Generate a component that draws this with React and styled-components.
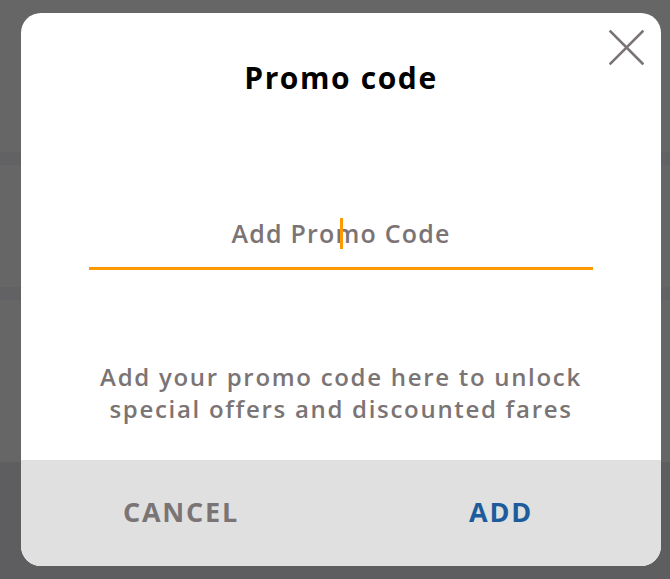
import React from "react";
import styled, { createGlobalStyle } from "styled-components";

const Global = createGlobalStyle`
  html, body {
    margin: 0;
    padding: 0;
    height: 579px;
    overflow: hidden;
  }
  body {
    font-family: "Open Sans", "Noto Sans", sans-serif;
    background: linear-gradient(
      to bottom,
      #666666 0px, #666666 152px,
      #626264 152px, #626264 165px,
      #666666 165px, #666666 287px,
      #626264 287px, #626264 300px,
      #666666 300px, #666666 462px,
      #5e5e60 462px, #5e5e60 100%
    );
  }
`;

const Page = styled.div`
  padding: 13px 9px 0 21px;
`;

const Modal = styled.div`
  position: relative;
  width: 640px;
  height: 553px;
  background: #ffffff;
  border-radius: 20px;
  overflow: hidden;
  display: flex;
  flex-direction: column;
`;

const Body = styled.div`
  flex: 1;
  display: flex;
  flex-direction: column;
  align-items: center;
`;

const Title = styled.h2`
  margin: 47px 0 0;
  font-size: 30px;
  line-height: 36px;
  font-weight: 700;
  letter-spacing: 1.6px;
  color: #000000;
`;

const Close = styled.button`
  position: absolute;
  top: 17px;
  right: 17px;
  width: 35px;
  height: 35px;
  padding: 0;
  border: none;
  background: none;
  cursor: pointer;
`;

const Field = styled.label`
  position: relative;
  display: block;
  width: 504px;
  margin-top: 117px;
  padding-bottom: 14px;
  border-bottom: 3px solid #ff9900;
`;

const Input = styled.input`
  display: block;
  width: 100%;
  height: 40px;
  padding: 0;
  border: none;
  outline: none;
  background: transparent;
  text-align: center;
  font-family: inherit;
  font-size: 25px;
  font-weight: 600;
  letter-spacing: 1.2px;
  color: #333;
  caret-color: transparent;
  &::placeholder {
    color: #7b7475;
    opacity: 1;
  }
`;

const Caret = styled.span`
  position: absolute;
  left: 251px;
  top: 5px;
  width: 3px;
  height: 31px;
  background: #ff9900;
`;

const Hint = styled.p`
  margin: 91px 0 0;
  text-align: center;
  font-size: 24px;
  line-height: 32px;
  font-weight: 600;
  letter-spacing: 1.7px;
  color: #7b7475;
`;

const Footer = styled.div`
  height: 106px;
  padding-bottom: 4px;
  box-sizing: border-box;
  background: #e0e0e0;
  display: grid;
  grid-template-columns: 1fr 1fr;
`;

const Action = styled.button`
  border: none;
  background: none;
  padding: 0;
  font-family: inherit;
  font-size: 27px;
  font-weight: 700;
  letter-spacing: 1.8px;
  color: ${(p) => (p.$primary ? "#1d5c9c" : "#7b7475")};
  cursor: pointer;
`;

export default function App() {
  return (
    <>
      <Global />
      <Page>
        <Modal>
          <Close aria-label="Close">
            <svg width="35" height="35" viewBox="0 0 35 35">
              <path
                d="M1.5 1.5 L33.5 33.5 M33.5 1.5 L1.5 33.5"
                stroke="#7b7475"
                strokeWidth="2.6"
                strokeLinecap="square"
              />
            </svg>
          </Close>
          <Body>
            <Title>Promo code</Title>
            <Field>
              <Input placeholder="Add Promo Code" />
              <Caret />
            </Field>
            <Hint>
              Add your promo code here to unlock
              <br />
              special offers and discounted fares
            </Hint>
          </Body>
          <Footer>
            <Action>CANCEL</Action>
            <Action $primary>ADD</Action>
          </Footer>
        </Modal>
      </Page>
    </>
  );
}
